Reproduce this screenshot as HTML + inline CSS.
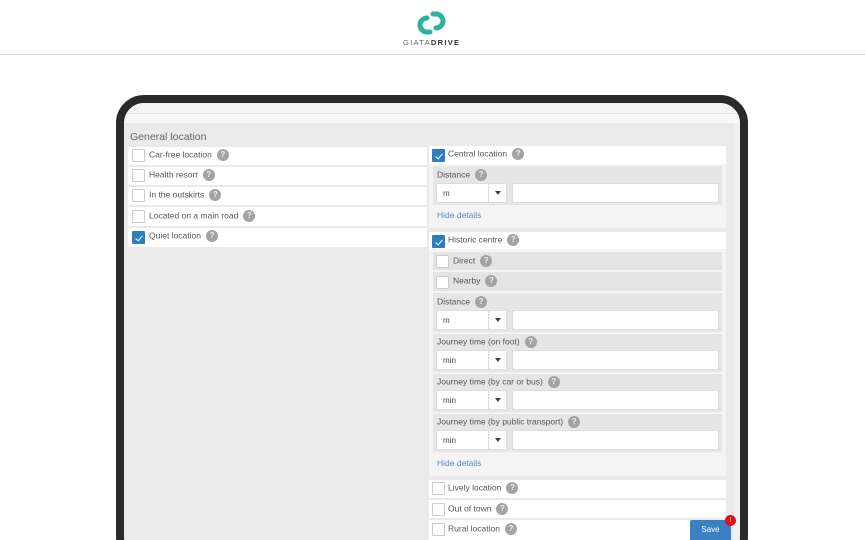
<!DOCTYPE html>
<html><head><style>
*{margin:0;padding:0;box-sizing:border-box}
html,body{width:865px;height:540px;overflow:hidden}
body{background:#fff;font-family:"Liberation Sans",sans-serif;position:relative}
.a{position:absolute}
.t{font-size:8.5px;color:#555;white-space:nowrap}
.cb{position:absolute;width:13px;height:13px;border:1px solid #ccc;background:#fff;border-radius:1px}
.cb.on{background:#2f7dc1;border-color:#2f7dc1}
.cb.on::after{content:"";position:absolute;left:3.5px;top:1.5px;width:3px;height:6px;border:solid #fff;border-width:0 1.3px 1.3px 0;transform:rotate(40deg)}
.q{display:inline-block;width:12px;height:12px;border-radius:50%;background:#a3a3a3;color:#eee;font-size:8px;line-height:12px;text-align:center;vertical-align:middle;margin-left:5px;font-weight:bold}
.row{position:absolute;background:#fff}
.sel{position:absolute;height:20px;background:#fff;border:1px solid #ddd;border-radius:2px;width:71px}
.sel span{position:absolute;left:6px;top:5px;font-size:8px;color:#444}
.sel i{position:absolute;left:51px;top:0;height:18px;border-left:1px solid #ddd;width:18px}
.sel i::after{content:"";position:absolute;left:6px;top:7px;border:3px solid transparent;border-top:4px solid #444}
.inp{position:absolute;height:20px;background:#fff;border:1px solid #ddd;border-radius:2px;left:512px;width:207px}
.hd{position:absolute;font-size:8.5px;color:#5a86c2}
</style></head><body>
<svg class="a" style="left:414px;top:10px" width="36" height="26" viewBox="0 0 36 26">
<path d="M13 8 A7 7 0 1 0 13 22 L16 22" fill="none" stroke="#2bb3a0" stroke-width="5" stroke-linecap="round"/>
<path d="M22 18 A7 7 0 1 0 22 4 L19 4" fill="none" stroke="#2bb3a0" stroke-width="5" stroke-linecap="round"/>
</svg>
<div class="a" style="left:403px;top:38px;font-size:7.5px;letter-spacing:1.3px;color:#666">GIATA<b style="color:#333">DRIVE</b></div>
<div class="a" style="left:0;top:54px;width:865px;height:1px;background:#cfdcdc"></div>

<div class="a" style="left:116px;top:95px;width:632px;height:470px;border:8px solid #2a2a2a;border-radius:28px;background:#eaeaea;overflow:hidden">
 <div class="a" style="left:0;top:0;width:620px;height:10px;background:#f3f3f3"></div>
 <div class="a" style="left:0;top:10px;width:620px;height:10px;background:#f8f8f8;border-top:1px solid #e5e5e5"></div>
 <div class="a" style="left:610px;top:20px;width:10px;height:460px;background:#f0f0f0"></div>
</div>
<div class="a" style="left:130px;top:131px;font-size:10.5px;color:#666">General location</div>

<div class="row" style="left:128px;top:147px;width:299px;height:18px"></div>
<div class="row" style="left:128px;top:167px;width:299px;height:18px"></div>
<div class="row" style="left:128px;top:187px;width:299px;height:18px"></div>
<div class="row" style="left:128px;top:207px;width:299px;height:19px"></div>
<div class="row" style="left:128px;top:228px;width:299px;height:19px"></div>
<div class="cb" style="left:132px;top:149px"></div><div class="a t" style="left:149px;top:149px">Car-free location<span class="q">?</span></div>
<div class="cb" style="left:132px;top:169px"></div><div class="a t" style="left:149px;top:169px">Health resort<span class="q">?</span></div>
<div class="cb" style="left:132px;top:189px"></div><div class="a t" style="left:149px;top:189px">In the outskirts<span class="q">?</span></div>
<div class="cb" style="left:132px;top:210px"></div><div class="a t" style="left:149px;top:210px">Located on a main road<span class="q">?</span></div>
<div class="cb on" style="left:132px;top:231px"></div><div class="a t" style="left:149px;top:230px">Quiet location<span class="q">?</span></div>

<div class="row" style="left:429px;top:146px;width:297px;height:82px;background:#f4f4f4"></div>
<div class="row" style="left:429px;top:146px;width:297px;height:18px"></div>
<div class="cb on" style="left:432px;top:149px"></div><div class="a t" style="left:448px;top:148px">Central location<span class="q">?</span></div>
<div class="a" style="left:433px;top:166px;width:289px;height:39px;background:#e6e6e6"></div>
<div class="a t" style="left:437px;top:169px">Distance<span class="q">?</span></div>
<div class="sel" style="left:436px;top:183px"><span>m</span><i></i></div><div class="inp" style="top:183px"></div>
<div class="hd" style="left:437px;top:210px">Hide details</div>

<div class="row" style="left:429px;top:232px;width:297px;height:244px;background:#f4f4f4"></div>
<div class="row" style="left:429px;top:232px;width:297px;height:17px"></div>
<div class="cb on" style="left:432px;top:235px"></div><div class="a t" style="left:448px;top:234px">Historic centre<span class="q">?</span></div>
<div class="a" style="left:433px;top:252px;width:289px;height:18px;background:#e4e4e4"></div>
<div class="cb" style="left:436px;top:255px"></div><div class="a t" style="left:453px;top:255px">Direct<span class="q">?</span></div>
<div class="a" style="left:433px;top:272px;width:289px;height:19px;background:#e4e4e4"></div>
<div class="cb" style="left:436px;top:276px"></div><div class="a t" style="left:453px;top:275px">Nearby<span class="q">?</span></div>

<div class="a" style="left:433px;top:293px;width:289px;height:39px;background:#e6e6e6"></div>
<div class="a t" style="left:437px;top:296px">Distance<span class="q">?</span></div>
<div class="sel" style="left:436px;top:310px"><span>m</span><i></i></div><div class="inp" style="top:310px"></div>

<div class="a" style="left:433px;top:334px;width:289px;height:38px;background:#e6e6e6"></div>
<div class="a t" style="left:437px;top:336px">Journey time (on foot)<span class="q">?</span></div>
<div class="sel" style="left:436px;top:350px"><span>min</span><i></i></div><div class="inp" style="top:350px"></div>

<div class="a" style="left:433px;top:374px;width:289px;height:38px;background:#e6e6e6"></div>
<div class="a t" style="left:437px;top:376px">Journey time (by car or bus)<span class="q">?</span></div>
<div class="sel" style="left:436px;top:390px"><span>min</span><i></i></div><div class="inp" style="top:390px"></div>

<div class="a" style="left:433px;top:414px;width:289px;height:38px;background:#e6e6e6"></div>
<div class="a t" style="left:437px;top:416px">Journey time (by public transport)<span class="q">?</span></div>
<div class="sel" style="left:436px;top:430px"><span>min</span><i></i></div><div class="inp" style="top:430px"></div>
<div class="hd" style="left:437px;top:458px">Hide details</div>

<div class="row" style="left:429px;top:480px;width:297px;height:18px"></div>
<div class="cb" style="left:432px;top:482px"></div><div class="a t" style="left:448px;top:482px">Lively location<span class="q">?</span></div>
<div class="row" style="left:429px;top:500px;width:297px;height:18px"></div>
<div class="cb" style="left:432px;top:503px"></div><div class="a t" style="left:448px;top:503px">Out of town<span class="q">?</span></div>
<div class="row" style="left:429px;top:520px;width:297px;height:20px"></div>
<div class="cb" style="left:432px;top:523px"></div><div class="a t" style="left:448px;top:523px">Rural location<span class="q">?</span></div>

<div class="a" style="left:690px;top:520px;width:41px;height:22px;background:#3a80c2;border-radius:2px;color:#fff;font-size:8px;text-align:center;line-height:20px">Save</div>
<div class="a" style="left:725px;top:515px;width:11px;height:11px;border-radius:50%;background:#e0101a;color:#fff;font-size:7px;text-align:center;line-height:11px">!</div>
</body></html>
